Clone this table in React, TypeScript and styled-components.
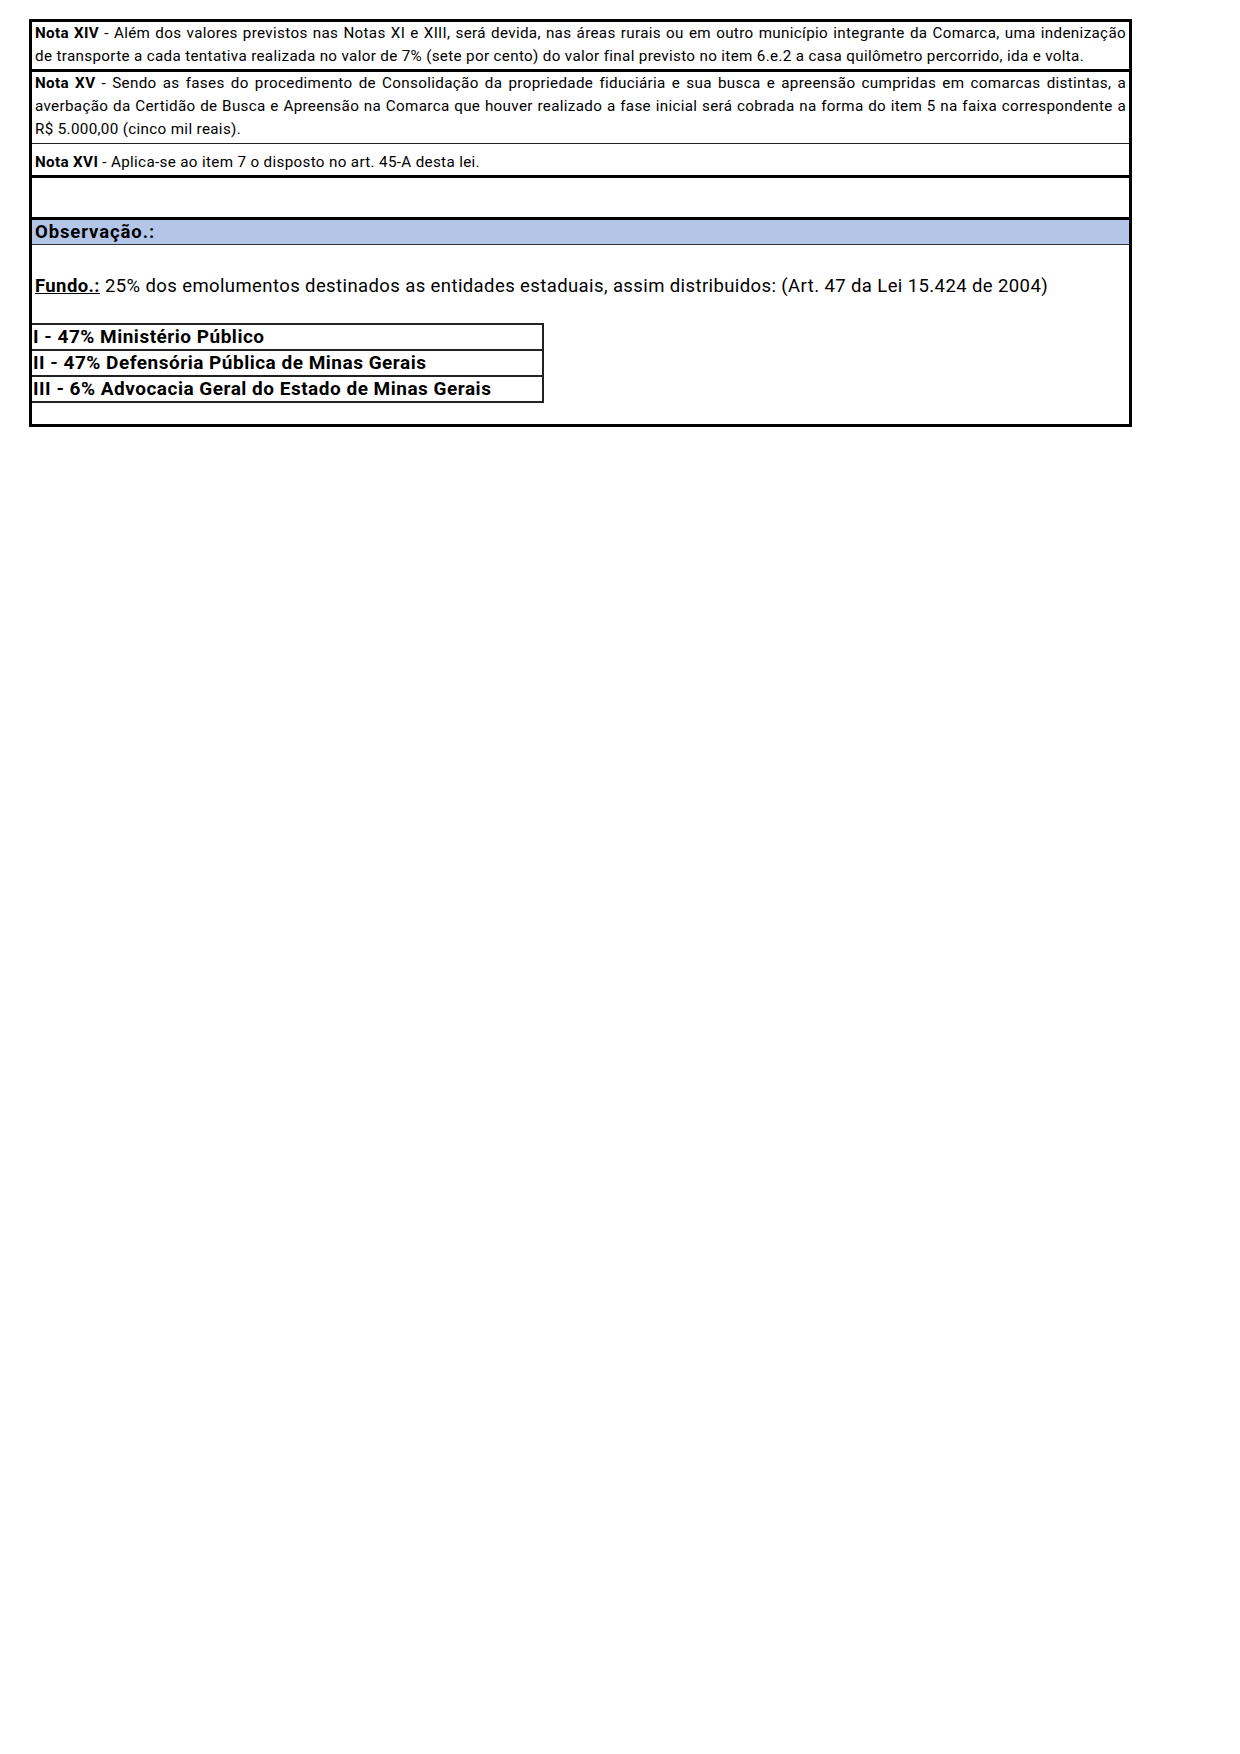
import React from "react";
import styled, { createGlobalStyle } from "styled-components";

const Global = createGlobalStyle`
  html, body {
    margin: 0;
    padding: 0;
    background: #fff;
  }
  body {
    font-family: Roboto, "Liberation Sans", Arial, sans-serif;
    color: #000;
  }
`;

type Sep = "thick" | "thin" | "none";

const notes: { label: string; lines: string[]; first: string; sep: Sep; pad?: string }[] = [
  {
    label: "Nota XIV",
    first:
      " - Além dos valores previstos nas Notas XI e XIII, será devida, nas áreas rurais ou em outro município integrante da Comarca, uma indenização",
    lines: [
      "de transporte a cada tentativa realizada no valor de 7% (sete por cento) do valor final previsto no item 6.e.2 a casa quilômetro percorrido, ida e volta.",
    ],
    sep: "thick",
    pad: "0 3px 1px",
  },
  {
    label: "Nota XV",
    first:
      " - Sendo as fases do procedimento de Consolidação da propriedade fiduciária e sua busca e apreensão cumpridas em comarcas distintas, a",
    lines: [
      "averbação da Certidão de Busca e Apreensão na Comarca que houver realizado a fase inicial será cobrada na forma do item 5 na faixa correspondente a",
      "R$ 5.000,00 (cinco mil reais).",
    ],
    sep: "thin",
    pad: "0 3px 2px",
  },
  {
    label: "Nota XVI",
    first: " - Aplica-se ao item 7 o disposto no art. 45-A desta lei.",
    lines: [],
    sep: "thick",
    pad: "7px 3px 1px",
  },
];

const funds = [
  "I - 47% Ministério Público",
  "II - 47% Defensória Pública de Minas Gerais",
  "III - 6% Advocacia Geral do Estado de Minas Gerais",
];

export default function App() {
  return (
    <>
      <Global />
      <Page>
        <Sheet>
          {notes.map((n) => (
            <NoteRow key={n.label} $sep={n.sep} $pad={n.pad}>
              <Line $justify={n.lines.length > 0}>
                <b>{n.label}</b>
                {n.first}
              </Line>
              {n.lines.map((l, i) => (
                <Line key={i} $justify={i < n.lines.length - 1}>
                  {l}
                </Line>
              ))}
            </NoteRow>
          ))}
          <BlankRow />
          <ObsHeader>Observação.:</ObsHeader>
          <ObsBody>
            <FundoLine>
              <u>
                <b>Fundo.:</b>
              </u>{" "}
              25% dos emolumentos destinados as entidades estaduais, assim
              distribuidos: (Art. 47 da Lei 15.424 de 2004)
            </FundoLine>
            <FundTable>
              {funds.map((f) => (
                <FundRow key={f}>{f}</FundRow>
              ))}
            </FundTable>
          </ObsBody>
        </Sheet>
      </Page>
    </>
  );
}

const Page = styled.div`
  width: 1240px;
  min-height: 1754px;
  padding: 19px 0 0 29px;
  box-sizing: border-box;
`;

const Sheet = styled.div`
  width: 1103px;
  box-sizing: border-box;
  border: 3px solid #000;
  display: flex;
  flex-direction: column;
`;

const NoteRow = styled.div<{ $sep: Sep; $pad?: string }>`
  padding: ${(p) => p.$pad || "0 3px"};
  font-size: 15.2px;
  letter-spacing: 0.34px;
  line-height: 23px;
  border-bottom: ${(p) =>
    p.$sep === "thick" ? "3px solid #000" : p.$sep === "thin" ? "1.5px solid #222" : "none"};
`;

const Line = styled.span<{ $justify: boolean }>`
  display: block;
  text-align: ${(p) => (p.$justify ? "justify" : "left")};
  text-align-last: ${(p) => (p.$justify ? "justify" : "auto")};
`;

const BlankRow = styled.div`
  height: 39px;
  border-bottom: 3px solid #000;
`;

const ObsHeader = styled.div`
  height: 24px;
  line-height: 24px;
  padding: 0 3px;
  background: #b4c6e7;
  font-weight: 700;
  font-size: 18.5px;
  letter-spacing: 0.9px;
  border-bottom: 1px solid #333;
`;

const ObsBody = styled.div`
  padding: 29px 0 21px;
`;

const FundoLine = styled.div`
  padding: 0 3px;
  font-size: 18.5px;
  letter-spacing: 0.4px;
  line-height: 24px;
  margin-bottom: 25px;
`;

const FundTable = styled.div`
  width: 512px;
  box-sizing: border-box;
  border: 2px solid #222;
  border-left: none;
  display: flex;
  flex-direction: column;
`;

const FundRow = styled.div`
  height: 24px;
  line-height: 24px;
  padding: 0 1px;
  font-size: 19px;
  letter-spacing: 0.5px;
  font-weight: 700;
  & + & {
    border-top: 2px solid #222;
  }
`;
